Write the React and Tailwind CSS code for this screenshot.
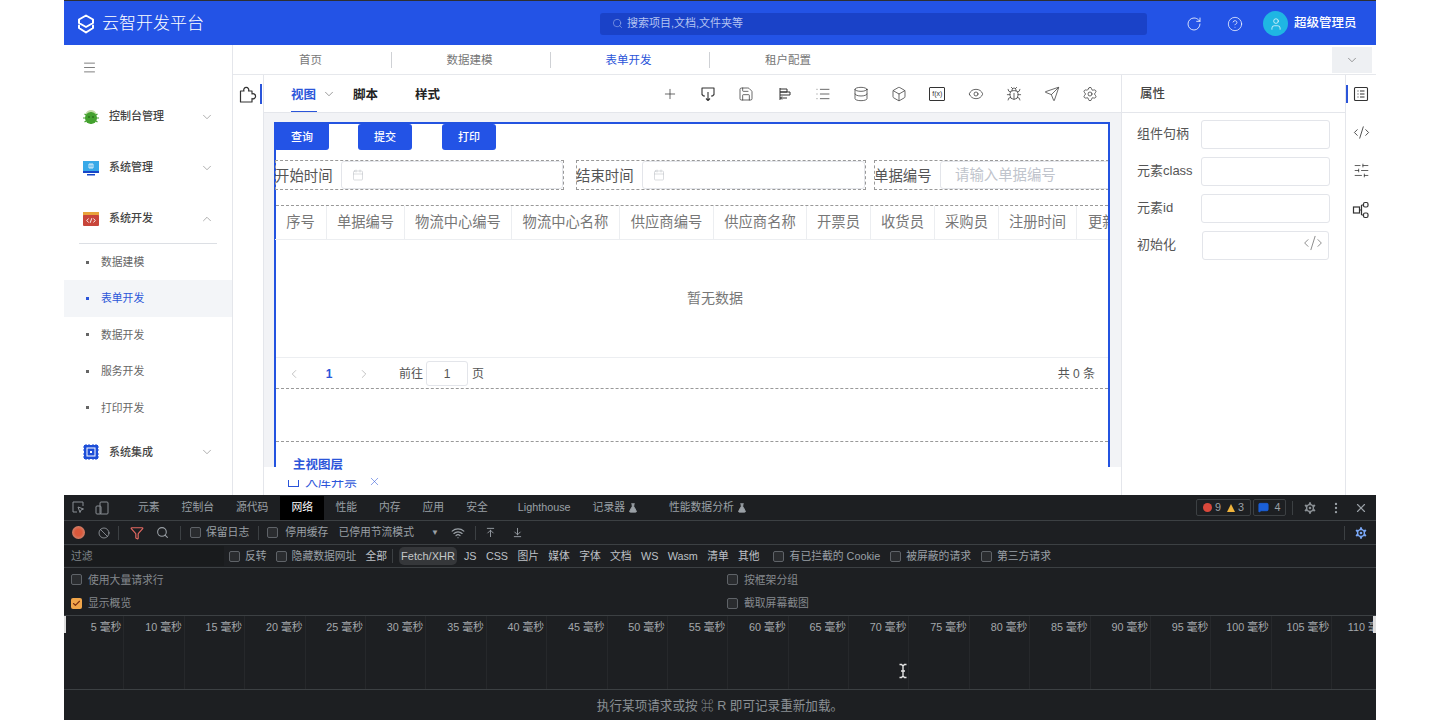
import React from "react";
import {
  Plus, Save, List, Database, Box, Eye, Bug, Send, Settings, RotateCw, CircleHelp, User, Search,
  ChevronDown, ChevronUp, ChevronLeft, ChevronRight, Menu, Calendar, CodeXml, SlidersHorizontal, X, Ban, Filter,
  Wifi, ArrowUpToLine, ArrowDownToLine, FlaskConical, EllipsisVertical, MessageSquare, Check,
} from "lucide-react";

const Bug1 = () => (
  <svg width="18" height="18" viewBox="0 0 18 18">
    <path d="M3.5 6C5 .8 13 .8 14.500 6Z" fill="#c3dca8" />
    <circle cx="9" cy="10" r="6" fill="#44a12f" />
    <path d="M1 10h16M2.500 6l13 8M15.500 6l-13 8M9 4v12" stroke="#44a12f" strokeWidth="1.2" />
    <circle cx="7" cy="9" r=".8" fill="#17520f" /><circle cx="11" cy="9" r=".8" fill="#17520f" />
  </svg>
);
const Monitor1 = () => (
  <svg width="18" height="18" viewBox="0 0 18 18">
    <rect x="1" y="2" width="16" height="10" fill="#38a9e8" />
    <rect x="1" y="12" width="16" height="2" fill="#1746c8" />
    <rect x="5" y="15" width="8" height="1.5" fill="#1746c8" />
    <path d="M7 5h4v4H7zM9 5v4" stroke="#fff" strokeWidth=".8" fill="none" />
  </svg>
);
const Dev1 = () => (
  <svg width="18" height="18" viewBox="0 0 18 18">
    <rect x="1" y="2" width="16" height="4" fill="#e8a33a" />
    <rect x="1" y="5" width="16" height="11" rx="1" fill="#c8453a" />
    <path d="M6.500 8.500 4.800 10.500l1.700 2M11.500 8.500l1.700 2-1.700 2M9.800 8.200l-1.600 4.600" stroke="#fff" strokeWidth=".9" fill="none" />
  </svg>
);
const Chip1 = () => (
  <svg width="18" height="18" viewBox="0 0 18 18">
    <rect x="2" y="2" width="14" height="14" fill="#1d4ed8" />
    <path d="M4 1v1M7 1v1M11 1v1M14 1v1M4 16v1M7 16v1M11 16v1M14 16v1M1 4h1M1 7h1M1 11h1M1 14h1M16 4h1M16 7h1M16 11h1M16 14h1" stroke="#1d4ed8" />
    <rect x="5" y="5" width="8" height="8" fill="none" stroke="#fff" strokeWidth="1" />
    <rect x="8" y="8" width="2" height="2" fill="#fff" />
  </svg>
);
const Logo = () => (
  <svg width="20" height="20" viewBox="0 0 20 20" fill="none" stroke="#fff" strokeWidth="2" strokeLinejoin="round" strokeLinecap="round">
    <path d="M10 1.500 17 5.500v3.500L10 13 3 9V5.500Z" />
    <path d="M3 11.500v2.500l7 4.500 7-4.500v-2.500" />
  </svg>
);
const Puzzle = () => (
  <svg width="18" height="18" viewBox="0 0 18 18" fill="none" stroke="#333" strokeWidth="1.2" strokeLinejoin="round">
    <path d="M1.500 5H5a2.500 2.500 0 1 1 4.500 0H13V8a2.500 2.500 0 1 1 0 4.500V16H1.500Z" />
  </svg>
);
const DropBox = () => (
  <svg width="16" height="16" viewBox="0 0 16 16" fill="none" stroke="#333" strokeWidth="1.1" strokeLinejoin="round">
    <path d="M5 10H3.500L2 8.500V2h12v6.500L12.500 10H11M8 6v8.500M6 12.500l2 2 2-2" />
  </svg>
);
const AlignIcon = () => (
  <svg width="16" height="16" viewBox="0 0 16 16" fill="none" stroke="#333" strokeWidth="1">
    <path d="M3 2v12M3 3h7v3H3M3 6h10v3H3M3 12h7M5 10.500 3.500 12 5 13.500" />
  </svg>
);
const TableIcon = () => (
  <svg width="16" height="16" viewBox="0 0 16 16" fill="none" stroke="#333" strokeWidth="1.1">
    <rect x="1.500" y="1.500" width="13" height="13" rx="1" />
    <path d="M4.500 5h1M7 5h4.500M4.500 8h1M7 8h4.500M4.500 11h1M7 11h4.500" />
  </svg>
);
const NodesIcon = () => (
  <svg width="18" height="18" viewBox="0 0 18 18" fill="none" stroke="#333" strokeWidth="1.2">
    <rect x="1.500" y="6" width="6" height="6" />
    <rect x="11.500" y="1.500" width="4.500" height="4.500" rx="1.500" />
    <rect x="11.500" y="12" width="4.500" height="4.500" rx="1.500" />
    <path d="M7.500 9h2M9.500 4v10M9.500 4h2M9.500 14h2" />
  </svg>
);
const IBeam = () => (
  <svg width="10" height="16" viewBox="0 0 10 16" fill="none">
    <path d="M1.500 1.500h2L5 3l1.500-1.500h2M5 3v10M1.500 14.500h2L5 13l1.500 1.500h2M3 8h4" stroke="#e5e5e5" strokeWidth="1.4" />
  </svg>
);

const tabs = [
  ["首页", "text-[#777]"],
  ["数据建模", "text-[#777]"],
  ["表单开发", "text-[#2b55d9]"],
  ["租户配置", "text-[#777]"],
];
const subs = ["数据建模", "表单开发", "数据开发", "服务开发", "打印开发"];
const cols = [
  ["序号", "w-[52px]"], ["单据编号", "w-[78px]"], ["物流中心编号", "w-[107px]"], ["物流中心名称", "w-[108px]"],
  ["供应商编号", "w-[94px]"], ["供应商名称", "w-[93px]"], ["开票员", "w-[64px]"], ["收货员", "w-[64px]"],
  ["采购员", "w-[64px]"], ["注册时间", "w-[78px]"], ["更新时间", "w-[80px]"],
];
const props = ["组件句柄", "元素class", "元素id"];
const devTabs = [
  ["元素", "ml-[0px]"], ["控制台", "ml-[22px]"], ["源代码", "ml-[22px]"], ["性能", "ml-[22px]"], ["内存", "ml-[22px]"],
  ["应用", "ml-[22px]"], ["安全", "ml-[22px]"], ["Lighthouse", "ml-[30px]"],
];
const ticks = [5, 10, 15, 20, 25, 30, 35, 40, 45, 50, 55, 60, 65, 70, 75, 80, 85, 90, 95, 100, 105, 110];

const Side = ({ icon, label, open }) => (
  <div className="h-[51px] flex items-center pl-[18px] pr-[18px] pt-[2px]">
    <span className="w-[18px] h-[18px] flex">{icon}</span>
    <span className="ml-[9px] text-[11px] font-medium text-[#444] flex-1">{label}</span>
    {open ? <ChevronUp size={14} strokeWidth={1} color="#777" /> : <ChevronDown size={14} strokeWidth={1} color="#777" />}
  </div>
);

const FormItem = ({ w, label, placeholder, ml }) => (
  <div className={`${w} ${ml} h-[30px] border border-dashed border-[#999] flex items-center shrink-0`}>
    <span className="text-[14.4px] leading-none text-[#555] w-[66px] -ml-[1px] pt-[2px] shrink-0 whitespace-nowrap">{label}</span>
    <div className="flex-1 h-[28px] border border-[#e3e5ea] rounded-[3px] flex items-center pl-[10px] bg-white min-w-0">
      {placeholder ? (
        <span className="ml-[4px] pt-[2px] text-[14.4px] text-[#c0c4cc] whitespace-nowrap">{placeholder}</span>
      ) : (
        <Calendar size={12} strokeWidth={1} color="#b5b8bf" />
      )}
    </div>
  </div>
);

const Cb = ({ className = "" }) => (
  <span className={`w-[11px] h-[11px] shrink-0 rounded-[2px] border border-[#5f6368] bg-[#2a2c2f] ${className}`} />
);
const Sep = ({ className = "" }) => <span className={`w-px h-[14px] bg-[#3c4043] shrink-0 ${className}`} />;

export default function App() {
  return (
    <div className="w-[1440px] h-[720px] overflow-hidden bg-white px-[64px] font-['Liberation_Sans','Noto_Sans_CJK_SC',sans-serif]">
      <div className="h-[45px] bg-[#2353e6] border-t border-[#2d2f33] flex items-center pt-[1px]">
        <div className="ml-[12px]"><Logo /></div>
        <span className="ml-[6px] text-[17px] leading-none font-light text-white whitespace-nowrap">云智开发平台</span>
        <div className="ml-[396px] w-[547px] h-[22px] rounded-[3px] bg-[#1a42c8] flex items-center pl-[12px]">
          <Search size={11} strokeWidth={1.2} color="#a9bcf0" />
          <span className="ml-[4px] text-[11px] text-[#b4c4f2]">搜索项目,文档,文件夹等</span>
        </div>
        <div className="ml-[39px]"><RotateCw size={16} strokeWidth={1.2} color="#fff" /></div>
        <div className="ml-[25px]"><CircleHelp size={16} strokeWidth={1.1} color="#fff" /></div>
        <div className="ml-[20px] w-[25px] h-[25px] rounded-full bg-[#1fb6e3] flex items-center justify-center">
          <User size={14} strokeWidth={1.2} color="#fff" />
        </div>
        <span className="ml-[6px] text-[12.5px] font-medium text-white whitespace-nowrap">超级管理员</span>
      </div>

      <div className="h-[450px] flex">
        <aside className="w-[169px] shrink-0 border-r border-[#e4e6eb] flex flex-col">
          <div className="h-[45px] flex items-center pl-[18px]">
            <Menu size={15} strokeWidth={1.2} color="#555" />
          </div>
          <Side icon={<Bug1 />} label="控制台管理" />
          <Side icon={<Monitor1 />} label="系统管理" />
          <Side icon={<Dev1 />} label="系统开发" open />
          <div className="h-px bg-[#dcdfe4] mx-[15px]" />
          {subs.map((s, i) => (
            <div key={s} className={`h-[36.4px] flex items-center pl-[22px] text-[10.8px] ${i === 1 ? "bg-[#f3f5f8] text-[#2b55d9]" : "text-[#666]"}`}>
              <span className={`w-[3px] h-[3px] mr-[12px] ${i === 1 ? "bg-[#2b55d9]" : "bg-[#666]"}`} />
              {s}
            </div>
          ))}
          <Side icon={<Chip1 />} label="系统集成" />
        </aside>

        <main className="flex-1 min-w-0 flex flex-col">
          <div className="h-[30px] flex items-center border-b border-[#e6e8ec]">
            {tabs.map(([t, c], i) => (
              <div key={t} className={`w-[159px] h-[16px] flex items-center justify-center pr-[3px] pt-[2px] ${i < 3 ? "border-r border-[#cfd1d5]" : ""}`}>
                <span className={`text-[11.5px] ${c}`}>{t}</span>
              </div>
            ))}
            <div className="ml-auto mr-[4px] w-[40px] h-[26px] bg-[#eef0f3] flex items-center justify-center">
              <ChevronDown size={14} strokeWidth={1} color="#555" />
            </div>
          </div>

          <div className="flex-1 min-h-0 flex">
            <div className="w-[31px] shrink-0 border-r border-[#e4e6eb] pt-[11px] pl-[6px] relative">
              <Puzzle />
              <span className="absolute right-[1px] top-[9px] w-[2px] h-[20px] bg-[#2b55d9]" />
            </div>

            <div className="w-[857px] shrink-0 flex flex-col">
              <div className="h-[38px] border-b border-[#e4e6eb] flex items-center relative pl-[27px] pt-[3px]">
                <span className="text-[12.5px] font-bold text-[#2b55d9]">视图</span>
                <ChevronDown size={14} strokeWidth={1} color="#555" className="ml-[6px] -mt-[2px]" />
                <span className="ml-[17px] text-[12.5px] font-bold text-[#222]">脚本</span>
                <span className="ml-[37px] text-[12.5px] font-bold text-[#222]">样式</span>
                <span className="absolute left-[27px] bottom-0 w-[26px] h-[1px] bg-[#2b55d9]" />
                <div className="absolute left-[398px] top-0 h-full flex items-center gap-[22.2px]">
                  <Plus size={16} strokeWidth={1.1} color="#333" />
                  <DropBox />
                  <Save size={16} strokeWidth={1.1} color="#333" />
                  <AlignIcon />
                  <List size={16} strokeWidth={1.1} color="#333" />
                  <Database size={16} strokeWidth={1.1} color="#333" />
                  <Box size={16} strokeWidth={1.1} color="#333" />
                  <span className="w-[16px] h-[14px] border border-[#333] rounded-[1px] flex items-center justify-center text-[7px] leading-none text-[#333]">f(x)</span>
                  <Eye size={16} strokeWidth={1.1} color="#333" />
                  <Bug size={16} strokeWidth={1.1} color="#333" />
                  <Send size={16} strokeWidth={1.1} color="#333" />
                  <Settings size={16} strokeWidth={1.1} color="#333" />
                </div>
              </div>

              <div className="h-[354px] bg-[#f2f3f6] pt-[9px] pl-[10px] pr-[11px]">
                <div className="h-[345px] border-x-2 border-t-2 border-[#2353e0] bg-white">
                  <div className="h-[26px] flex -ml-[2px]">
                    <div className="w-[55px] h-[26px] bg-[#2353e6] rounded-b-[3px] pl-[1px] text-white text-[11px] font-medium flex items-center justify-center">查询</div>
                    <div className="ml-[29px] w-[54px] h-[26px] bg-[#2353e6] rounded-[3px] text-white text-[11px] font-medium flex items-center justify-center">提交</div>
                    <div className="ml-[30px] w-[54px] h-[26px] bg-[#2353e6] rounded-[3px] text-white text-[11px] font-medium flex items-center justify-center">打印</div>
                  </div>
                  <div className="mt-[10px] -ml-[1px] flex overflow-hidden">
                    <FormItem w="w-[289px]" label="开始时间" />
                    <FormItem ml="ml-[12px]" w="w-[290px]" label="结束时间" />
                    <FormItem ml="ml-[8px]" w="w-[240px]" label="单据编号" placeholder="请输入单据编号" />
                  </div>
                  <div className="mt-[15px] border-t border-dashed border-[#999] h-[183px] flex flex-col">
                    <div className="h-[34px] -ml-[1px] flex border-b border-[#eceef1] overflow-hidden shrink-0">
                      {cols.map(([c, w]) => (
                        <div key={c} className={`${w} shrink-0 border-r border-[#eceef1] flex items-center justify-center pt-[1px] text-[14.3px] text-[#777] whitespace-nowrap`}>{c}</div>
                      ))}
                    </div>
                    <div className="h-[118px] flex items-center justify-center border-b border-[#eceef1] text-[14px] text-[#777] pl-[46px] shrink-0">暂无数据</div>
                    <div className="h-[31px] pt-[1px] flex items-center text-[12px] text-[#555] border-b border-dashed border-[#999] shrink-0">
                      <ChevronLeft size={14} strokeWidth={1} color="#999" className="ml-[11px]" />
                      <span className="ml-[22px] w-[12px] text-center font-bold text-[#2b55d9]">1</span>
                      <ChevronRight size={14} strokeWidth={1} color="#999" className="ml-[22px]" />
                      <span className="ml-[28px]">前往</span>
                      <span className="ml-[3px] w-[42px] h-[25px] border border-[#e3e5ea] rounded-[3px] flex items-center justify-center">1</span>
                      <span className="ml-[4px]">页</span>
                      <span className="ml-auto mr-[13px]">共 0 条</span>
                    </div>
                    <div className="h-[53px] border-b border-dashed border-[#999] shrink-0" />
                    <div className="pl-[17px] pt-[17px] text-[12.5px] leading-none font-bold text-[#2b55d9] shrink-0">主视图层</div>
                  </div>
                </div>
              </div>

              <div className="flex-1 min-h-0 pl-[24px] pt-[13px] flex items-start">
                <div className="h-[15px] overflow-hidden flex items-start">
                  <div className="-mt-[5px] flex items-center whitespace-nowrap text-[13px] leading-none text-[#2b55d9]">
                    <span className="w-[11px] h-[11px] border border-[#2b55d9] mr-[6px]" />
                    <span>入库开票</span>
                  </div>
                </div>
                <X size={13} strokeWidth={1} color="#2b55d9" className="ml-[11px] -mt-[5px]" />
              </div>
            </div>

            <div className="w-[225px] shrink-0 border-x border-[#e4e6eb] flex flex-col">
              <div className="h-[38px] border-b border-[#e4e6eb] flex items-center pl-[18px] pt-[2px] text-[12.5px] font-medium text-[#444]">属性</div>
              <div className="pl-[15px] pt-[7px] flex flex-col gap-[8px]">
                {props.map((p) => (
                  <div key={p} className="flex items-center h-[29px]">
                    <span className="w-[64px] pb-[2px] text-[13px] text-[#555] whitespace-nowrap">{p}</span>
                    <span className="w-[129px] h-[29px] border border-[#e3e5ea] rounded-[3px]" />
                  </div>
                ))}
                <div className="flex items-center h-[29px]">
                  <span className="w-[65px] pb-[2px] text-[13px] text-[#555] whitespace-nowrap">初始化</span>
                  <span className="w-[127px] h-[29px] border border-[#e3e5ea] rounded-[3px] flex justify-end pr-[5px] pt-[1px]">
                    <CodeXml size={20} strokeWidth={0.8} color="#555" />
                  </span>
                </div>
              </div>
            </div>

            <div className="flex-1 flex flex-col items-center pt-[11px] gap-[21.5px] relative">
              <TableIcon />
              <CodeXml size={17} strokeWidth={1.2} color="#333" />
              <SlidersHorizontal size={17} strokeWidth={1.1} color="#333" />
              <NodesIcon />
              <span className="absolute left-0 top-[10px] w-[2px] h-[18px] bg-[#2b55d9]" />
            </div>
          </div>
        </main>
      </div>

      <div className="h-[225px] bg-[#1d1f22] text-[#9aa0a6] text-[10.8px] flex flex-col relative">
        <div className="h-[26px] border-b border-[#3c4043] flex items-center shrink-0">
          <div className="w-[74px] flex items-center pl-[8px] gap-[10px] text-[#8a8f94] shrink-0">
            <svg width="13" height="13" viewBox="0 0 13 13" fill="none" stroke="currentColor" strokeWidth="1"><path d="M5 11H1V1h10v4M6 6l5.500 2-2.500 1-1 2.500z" /></svg>
            <svg width="14" height="14" viewBox="0 0 14 14" fill="none" stroke="currentColor" strokeWidth="1"><rect x="5" y="1" width="8" height="12" rx="1" /><rect x="1" y="5" width="5" height="8" rx="1" /></svg>
          </div>
          {devTabs.slice(0, 3).map(([t, m]) => <span key={t} className={`${m} whitespace-nowrap`}>{t}</span>)}
          <span className="ml-[12px] h-[24px] w-[44px] bg-black text-white flex items-center justify-center shrink-0">网络</span>
          {devTabs.slice(3).map(([t, m], i) => <span key={t} className={`${i === 0 ? "ml-[11px]" : m} whitespace-nowrap`}>{t}</span>)}
          <span className="ml-[22px] flex items-center gap-[3px] whitespace-nowrap">记录器<FlaskConical size={10} fill="currentColor" /></span>
          <span className="ml-[31px] flex items-center gap-[3px] whitespace-nowrap">性能数据分析<FlaskConical size={10} fill="currentColor" /></span>
          <div className="ml-auto flex items-center h-[17px] border border-[#3c4043] rounded-[2px] px-[6px] gap-[3px] shrink-0">
            <span className="w-[9px] h-[9px] rounded-full bg-[#d9483b]" /><span>9</span>
            <span className="ml-[3px] w-0 h-0 border-x-[4.5px] border-x-transparent border-b-[8px] border-b-[#f0b43c]" /><span>3</span>
          </div>
          <div className="ml-[2px] w-[33px] flex items-center justify-center h-[17px] border border-[#3c4043] rounded-[2px] gap-[5px] shrink-0">
            <MessageSquare size={11} fill="#1a5fd8" color="#1a5fd8" /><span>4</span>
          </div>
          <Sep className="ml-[6px]" />
          <Settings size={16} fill="#8a8f94" color="#1d1f22" className="ml-[9px]" />
          <EllipsisVertical size={14} className="ml-[11px]" />
          <X size={14} className="ml-[11px] mr-[8px]" />
        </div>

        <div className="h-[24px] border-b border-[#3c4043] flex items-center shrink-0">
          <span className="ml-[8px] w-[13px] h-[13px] rounded-full bg-[radial-gradient(circle,#d9583b_35%,#c9a08e_100%)] shrink-0" />
          <Ban size={12} className="ml-[13px]" strokeWidth={1.6} />
          <Sep className="ml-[8px]" />
          <Filter size={14} color="#e46962" strokeWidth={2} className="ml-[11px]" />
          <Search size={13} className="ml-[12px]" />
          <Sep className="ml-[11px]" />
          <Cb className="ml-[9px]" />
          <span className="ml-[5px]">保留日志</span>
          <Sep className="ml-[9px]" />
          <Cb className="ml-[8px]" />
          <span className="ml-[7px]">停用缓存</span>
          <span className="ml-[10px]">已停用节流模式</span>
          <span className="ml-[17px] text-[8px]">▼</span>
          <Wifi size={14} className="ml-[12px]" />
          <Sep className="ml-[10px]" />
          <ArrowUpToLine size={11} className="ml-[9px]" />
          <ArrowDownToLine size={11} className="ml-[16px]" />
          <Sep className="ml-auto" />
          <Settings size={16} fill="#7aa7f5" color="#1d1f22" className="ml-[8px] mr-[7px]" />
        </div>

        <div className="h-[23px] border-b border-[#3c4043] flex items-center shrink-0 whitespace-nowrap">
          <div className="w-[160px] h-[20px] bg-[#191b1d] pl-[7px] flex items-center text-[#80868b] shrink-0">过滤</div>
          <Cb className="ml-[5px]" /><span className="ml-[5px]">反转</span>
          <Cb className="ml-[9px]" /><span className="ml-[5px]">隐藏数据网址</span>
          <span className="ml-[9px] text-[#bdc1c6]">全部</span>
          <Sep className="ml-[5px]" />
          <span className="ml-[6px] h-[18px] w-[58px] rounded-[5px] bg-[#35373a] text-[#c4c7c9] flex items-center justify-center text-[11px] shrink-0">Fetch/XHR</span>
          <div className="ml-[7px] flex items-center gap-[9.3px] text-[#bdc1c6]">
            <span>JS</span><span>CSS</span><span>图片</span><span>媒体</span><span>字体</span><span>文档</span><span>WS</span><span>Wasm</span><span>清单</span><span>其他</span>
          </div>
          <Cb className="ml-[13px]" /><span className="ml-[6px]">有已拦截的 Cookie</span>
          <Cb className="ml-[10px]" /><span className="ml-[5px]">被屏蔽的请求</span>
          <Cb className="ml-[10px]" /><span className="ml-[5px]">第三方请求</span>
        </div>

        <div className="h-[48px] border-b border-[#3c4043] grid grid-cols-[663px_1fr] grid-rows-2 shrink-0 text-[#85898e]">
          <div className="flex items-center pl-[7px]"><Cb /><span className="ml-[6px]">使用大量请求行</span></div>
          <div className="flex items-center"><Cb /><span className="ml-[6px]">按框架分组</span></div>
          <div className="flex items-center pl-[7px]">
            <span className="w-[11px] h-[11px] rounded-[2px] bg-[#f0a54a] flex items-center justify-center"><Check size={9} strokeWidth={3} color="#7a2d10" /></span>
            <span className="ml-[6px]">显示概览</span>
          </div>
          <div className="flex items-center"><Cb /><span className="ml-[6px]">截取屏幕截图</span></div>
        </div>

        <div className="h-[74px] border-b border-[#3c4043] flex overflow-hidden shrink-0">
          {ticks.map((t) => (
            <div key={t} className="w-[60.4px] shrink-0 h-full border-r border-[#26282b] pr-[2px] pt-[3px] text-right whitespace-nowrap text-[#a4a8ac]">{t} 毫秒</div>
          ))}
        </div>

        <div className="flex-1 flex items-center justify-center pt-[2px] text-[12.6px] text-[#8a8f94]">执行某项请求或按 ⌘ R 即可记录重新加载。</div>

        <span className="absolute left-0 top-[121px] w-[2px] h-[17px] bg-[#ddd]" />
        <span className="absolute right-0 top-[121px] w-[3px] h-[17px] bg-[#ddd]" />
        <span className="absolute left-[834px] top-[168px]"><IBeam /></span>
      </div>
    </div>
  );
}
